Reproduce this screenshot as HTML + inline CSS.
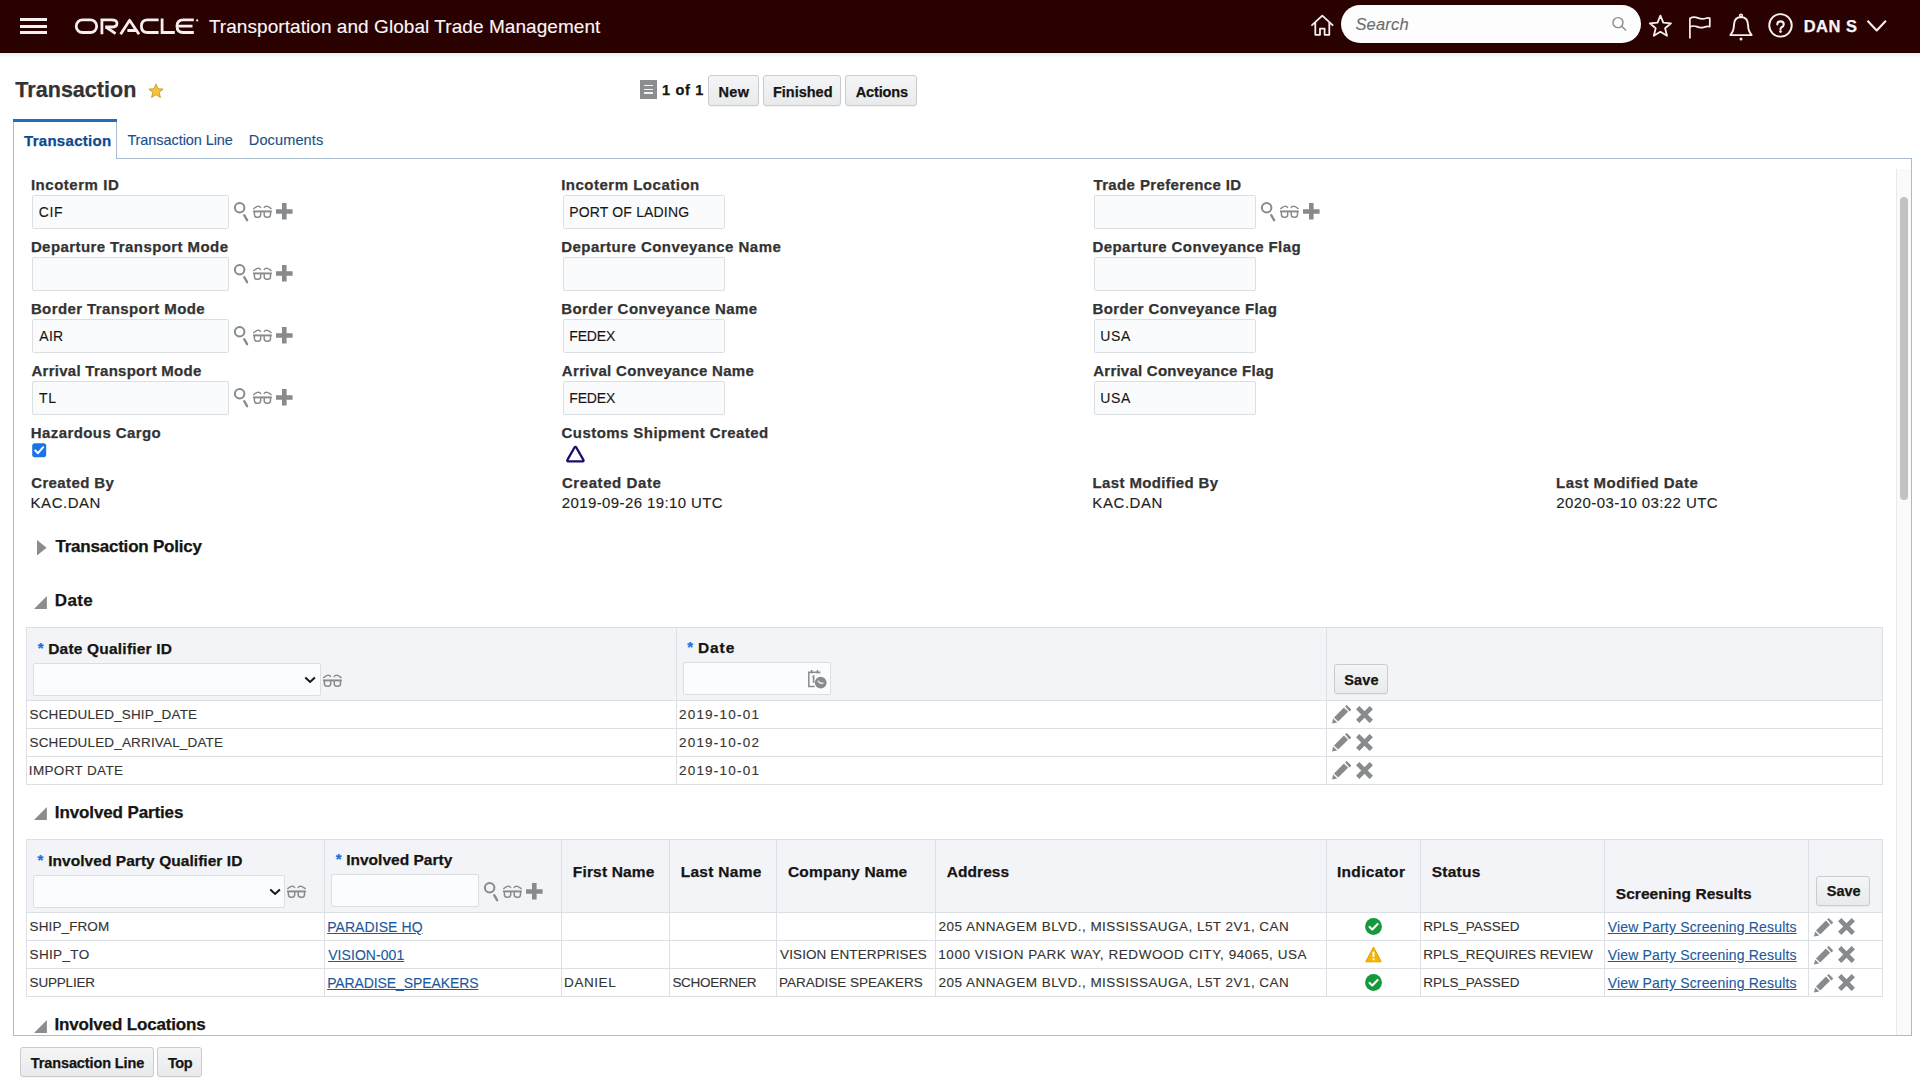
<!DOCTYPE html><html><head><meta charset="utf-8"><title>Transaction</title><style>
html,body{margin:0;padding:0;}
body{width:1920px;height:1080px;overflow:hidden;background:#ffffff;position:relative;font-family:"Liberation Sans", sans-serif;}
.t{position:absolute;white-space:nowrap;line-height:1;}
.t{-webkit-text-stroke:0.12px currentColor;}
.t[style*="font-weight:bold"]{-webkit-text-stroke:0.25px currentColor;}
.b{position:absolute;}
.s{position:absolute;overflow:visible;}
.btn{position:absolute;border:1px solid #c9cbce;border-radius:3px;background:linear-gradient(#f4f5f6,#e9eaec);box-shadow:0 1px 0 rgba(0,0,0,0.04);}
.inp{position:absolute;border:1px solid #dcdfe2;border-radius:2px;background:#fafbfc;}
</style></head><body>
<div class="b" style="left:0.00px;top:0.00px;width:1920.00px;height:52.50px;background:#2a0101;"></div>
<div class="b" style="left:0.00px;top:52.50px;width:1920.00px;height:5.50px;background:linear-gradient(rgba(0,0,0,0.07),rgba(0,0,0,0));"></div>
<div class="b" style="left:19.80px;top:18.20px;width:27.70px;height:3.00px;background:#f7f0f0;"></div>
<div class="b" style="left:19.80px;top:24.60px;width:27.70px;height:3.00px;background:#f7f0f0;"></div>
<div class="b" style="left:19.80px;top:31.00px;width:27.70px;height:3.00px;background:#f7f0f0;"></div>
<svg class="s" style="left:74.00px;top:17.50px;width:126px;height:17px" viewBox="0 0 126 17"><g fill="none" stroke="#f6efef" stroke-width="2.8">
<rect x="2.2" y="1.9" width="20.5" height="12.6" rx="6.3"/>
<path d="M27.9 16.2 V1.9 H37.5 Q43.0 1.9 43.0 5.45 Q43.0 9.0 37.5 9.0 H31.2"/><path d="M31.9 9.0 L41.6 15.6" stroke-linecap="butt"/>
<path d="M46.6 16.2 L55.6 2.2 L65.0 16.2 M61.8 12.5 H53.4" stroke-linejoin="round"/>
<path d="M84.6 1.9 H73.6 Q67.4 1.9 67.4 8.2 Q67.4 14.5 73.6 14.5 H84.6"/>
<path d="M88.1 0.5 V14.5 H100.8"/>
<path d="M119.8 1.9 H109.3 Q103.0 1.9 103.0 8.2 Q103.0 14.5 109.3 14.5 H119.8 M104.5 8.2 H118.5"/>
</g><circle cx="123.2" cy="2.4" r="1.1" fill="#f6efef"/></svg>
<div class="t " style="left:208.88px;top:16.92px;font-size:19px;font-weight:normal;color:#fbf6f6;letter-spacing:0.059px;">Transportation and Global Trade Management</div>
<svg class="s" style="left:1310.00px;top:14.00px;width:25px;height:23px" viewBox="0 0 25 23"><path d="M2 11.2 L12.3 1.6 L22.6 11.2 M5.3 8.4 V20.8 H10 V14.6 H14.6 V20.8 H19.3 V8.4" fill="none" stroke="#f7f0f0" stroke-width="1.8" stroke-linejoin="round" stroke-linecap="round"/></svg>
<div class="b" style="left:1341px;top:5px;width:300px;height:38px;border-radius:19px;background:#fdfdfd;"></div>
<div class="t " style="left:1355.44px;top:15.63px;font-size:16.5px;font-weight:normal;color:#6e6e6e;letter-spacing:0.17px;font-style:italic;">Search</div>
<svg class="s" style="left:1611.00px;top:16.00px;width:17px;height:16px" viewBox="0 0 17 16"><circle cx="7" cy="6.6" r="5" fill="none" stroke="#8a8a8a" stroke-width="1.4"/><path d="M10.6 10.2 L14.6 14" stroke="#8a8a8a" stroke-width="1.5" stroke-linecap="round"/></svg>
<svg class="s" style="left:1648.00px;top:14.00px;width:25px;height:23px" viewBox="0 0 25 23"><path d="M12.4 1.6 L15.3 8.7 L23 9.3 L17.1 14.3 L19 21.8 L12.4 17.8 L5.8 21.8 L7.7 14.3 L1.8 9.3 L9.5 8.7 Z" fill="none" stroke="#f7f0f0" stroke-width="1.8" stroke-linejoin="round"/></svg>
<svg class="s" style="left:1688.00px;top:15.00px;width:25px;height:25px" viewBox="0 0 25 25"><path d="M1.9 23.4 V3.4 Q5.5 1.2 9.8 2.9 Q14 4.7 18.0 3.2 Q20.6 2.4 21.8 3.2 V11.6 Q19.5 10.8 16.4 12.1 Q12.6 13.3 8.8 11.6 Q5.1 10.2 1.9 12.1" fill="none" stroke="#f7f0f0" stroke-width="1.7" stroke-linejoin="round"/></svg>
<svg class="s" style="left:1728.00px;top:13.00px;width:27px;height:29px" viewBox="0 0 27 29"><g fill="none" stroke="#f7f0f0" stroke-width="1.9" stroke-linejoin="round"><path d="M1.6 22.1 H24.4 M2.3 22.1 Q5.9 18.2 5.9 12.6 Q5.9 4.2 13 4.0 Q20.1 4.2 20.1 12.6 Q20.1 18.2 23.7 22.1"/><circle cx="13" cy="2.5" r="1.3" stroke-width="1.6"/></g><circle cx="13" cy="26.0" r="1.5" fill="#f7f0f0"/></svg>
<svg class="s" style="left:1767.00px;top:12.00px;width:27px;height:27px" viewBox="0 0 27 27"><circle cx="13.5" cy="13.35" r="11.25" fill="none" stroke="#f7f0f0" stroke-width="1.9"/><path d="M10.3 12.4 Q10.3 9.35 13.5 9.35 Q16.75 9.35 16.75 12.2 Q16.75 14.2 14.6 15.2 Q13.5 15.8 13.5 17.3" fill="none" stroke="#f7f0f0" stroke-width="2.1" stroke-linecap="round"/><circle cx="13.5" cy="19.6" r="1.35" fill="#f7f0f0"/></svg>
<div class="t " style="left:1803.69px;top:17.83px;font-size:16.5px;font-weight:bold;color:#faf5f5;letter-spacing:0.479px;">DAN S</div>
<svg class="s" style="left:1866.00px;top:19.00px;width:22px;height:14px" viewBox="0 0 22 14"><path d="M1.5 1.8 L10.7 11.5 L19.9 1.8" fill="none" stroke="#f7f0f0" stroke-width="2.1" stroke-linejoin="round"/></svg>
<div class="t " style="left:15.36px;top:79.70px;font-size:21.5px;font-weight:bold;color:#333333;letter-spacing:0.029px;">Transaction</div>
<svg class="s" style="left:148.00px;top:83.00px;width:16px;height:16px" viewBox="0 0 16 16"><path d="M8 0.9 L10 5.8 L15.1 6.1 L11.2 9.4 L12.4 14.5 L8 11.7 L3.6 14.5 L4.8 9.4 L0.9 6.1 L6 5.8 Z" fill="#f4c43a" stroke="#c99b22" stroke-width="0.9" stroke-linejoin="round"/></svg>
<div class="b" style="left:640.10px;top:80.00px;width:16.70px;height:18.60px;background:#8b8e91;"></div>
<div class="b" style="left:644.00px;top:84.90px;width:9.00px;height:1.50px;background:#f4f4f4;"></div>
<div class="b" style="left:644.00px;top:88.60px;width:9.00px;height:1.50px;background:#f4f4f4;"></div>
<div class="b" style="left:644.00px;top:92.30px;width:9.00px;height:1.50px;background:#f4f4f4;"></div>
<div class="t " style="left:661.89px;top:82.73px;font-size:14.5px;font-weight:bold;color:#161513;letter-spacing:0.729px;">1 of 1</div>
<div class="btn" style="left:708.00px;top:75.00px;width:49.00px;height:29.00px"></div>
<div class="t " style="left:718.43px;top:84.83px;font-size:14.5px;font-weight:bold;color:#161513;letter-spacing:0.365px;">New</div>
<div class="btn" style="left:763.00px;top:75.00px;width:76.00px;height:29.00px"></div>
<div class="t " style="left:773.03px;top:84.83px;font-size:14.5px;font-weight:bold;color:#161513;letter-spacing:-0.014px;">Finished</div>
<div class="btn" style="left:845.00px;top:75.00px;width:70.00px;height:29.00px"></div>
<div class="t " style="left:855.64px;top:84.83px;font-size:14.5px;font-weight:bold;color:#161513;letter-spacing:-0.119px;">Actions</div>
<div class="b" style="left:13px;top:158px;width:1897px;height:876px;border:1px solid #a9bccf;background:#fff;"></div>
<div class="b" style="left:13px;top:119px;width:102px;height:40px;border-left:1px solid #a9bccf;border-right:1px solid #a9bccf;background:#fff;"></div>
<div class="b" style="left:13.00px;top:119.00px;width:104.00px;height:3.00px;background:#1a6ec4;"></div>
<div class="t " style="left:24.04px;top:133.10px;font-size:15px;font-weight:bold;color:#0c4a8f;letter-spacing:0.29px;">Transaction</div>
<div class="t " style="left:127.38px;top:132.73px;font-size:14.5px;font-weight:normal;color:#1a4f8c;letter-spacing:-0.074px;">Transaction Line</div>
<div class="t " style="left:248.81px;top:132.73px;font-size:14.5px;font-weight:normal;color:#1a4f8c;letter-spacing:0.134px;">Documents</div>
<div class="b" style="left:1896.00px;top:169.00px;width:14.00px;height:866.00px;background:#fafafa;border-left:1px solid #e9e9e9;"></div>
<div class="b" style="left:1900px;top:197.2px;width:8px;height:302.6px;border-radius:4px;background:#c2c2c2;"></div>
<div class="t " style="left:30.89px;top:177.30px;font-size:15px;font-weight:bold;color:#333333;letter-spacing:0.532px;">Incoterm ID</div>
<div class="inp" style="left:32.00px;top:195.00px;width:195.00px;height:32.00px;"></div>
<div class="t " style="left:38.69px;top:204.85px;font-size:14px;font-weight:normal;color:#161513;letter-spacing:0.61px;">CIF</div>
<svg class="s" style="left:232.90px;top:201.00px;width:17px;height:21px" viewBox="0 0 17 21"><circle cx="6.65" cy="6.75" r="4.75" fill="none" stroke="#878b8e" stroke-width="2.0"/><path d="M11.2 14.2 L14.1 19.2" stroke="#878b8e" stroke-width="2.3" stroke-linecap="round"/></svg>
<svg class="s" style="left:252.40px;top:204.00px;width:21px;height:15px" viewBox="0 0 21 15"><g fill="none" stroke="#878b8e"><path d="M1.0 7.4 H19.8" stroke-width="1.9"/><path d="M2.4 7.4 V10.6 Q2.4 13.2 5.0 13.2 H6.2 Q8.7 13.2 8.7 10.6 V7.4" stroke-width="1.5"/><path d="M12.2 7.4 V10.6 Q12.2 13.2 14.8 13.2 H16.0 Q18.5 13.2 18.5 10.6 V7.4" stroke-width="1.5"/><path d="M1.3 4.9 Q4.5 2.2 6.3 2.1 Q8.0 2.1 8.9 4.0" stroke-width="1.4"/><path d="M19.5 4.9 Q16.3 2.2 14.5 2.1 Q12.8 2.1 11.9 4.0" stroke-width="1.4"/></g></svg>
<svg class="s" style="left:276.40px;top:202.90px;width:17px;height:17px" viewBox="0 0 17 17"><path d="M6 0 H10.6 V6.2 H16.6 V10.8 H10.6 V16.6 H6 V10.8 H0 V6.2 H6 Z" fill="#878b8e"/></svg>
<div class="t " style="left:561.20px;top:177.30px;font-size:15px;font-weight:bold;color:#333333;letter-spacing:0.501px;">Incoterm Location</div>
<div class="inp" style="left:563.00px;top:195.00px;width:160.00px;height:32.00px;"></div>
<div class="t " style="left:569.25px;top:204.85px;font-size:14px;font-weight:normal;color:#161513;letter-spacing:0.159px;">PORT OF LADING</div>
<div class="t " style="left:1093.43px;top:177.30px;font-size:15px;font-weight:bold;color:#333333;letter-spacing:0.378px;">Trade Preference ID</div>
<div class="inp" style="left:1094.00px;top:195.00px;width:160.00px;height:32.00px;"></div>
<svg class="s" style="left:1259.90px;top:201.00px;width:17px;height:21px" viewBox="0 0 17 21"><circle cx="6.65" cy="6.75" r="4.75" fill="none" stroke="#878b8e" stroke-width="2.0"/><path d="M11.2 14.2 L14.1 19.2" stroke="#878b8e" stroke-width="2.3" stroke-linecap="round"/></svg>
<svg class="s" style="left:1279.40px;top:204.00px;width:21px;height:15px" viewBox="0 0 21 15"><g fill="none" stroke="#878b8e"><path d="M1.0 7.4 H19.8" stroke-width="1.9"/><path d="M2.4 7.4 V10.6 Q2.4 13.2 5.0 13.2 H6.2 Q8.7 13.2 8.7 10.6 V7.4" stroke-width="1.5"/><path d="M12.2 7.4 V10.6 Q12.2 13.2 14.8 13.2 H16.0 Q18.5 13.2 18.5 10.6 V7.4" stroke-width="1.5"/><path d="M1.3 4.9 Q4.5 2.2 6.3 2.1 Q8.0 2.1 8.9 4.0" stroke-width="1.4"/><path d="M19.5 4.9 Q16.3 2.2 14.5 2.1 Q12.8 2.1 11.9 4.0" stroke-width="1.4"/></g></svg>
<svg class="s" style="left:1303.40px;top:202.90px;width:17px;height:17px" viewBox="0 0 17 17"><path d="M6 0 H10.6 V6.2 H16.6 V10.8 H10.6 V16.6 H6 V10.8 H0 V6.2 H6 Z" fill="#878b8e"/></svg>
<div class="t " style="left:30.89px;top:239.30px;font-size:15px;font-weight:bold;color:#333333;letter-spacing:0.417px;">Departure Transport Mode</div>
<div class="inp" style="left:32.00px;top:257.00px;width:195.00px;height:32.00px;"></div>
<svg class="s" style="left:232.90px;top:263.00px;width:17px;height:21px" viewBox="0 0 17 21"><circle cx="6.65" cy="6.75" r="4.75" fill="none" stroke="#878b8e" stroke-width="2.0"/><path d="M11.2 14.2 L14.1 19.2" stroke="#878b8e" stroke-width="2.3" stroke-linecap="round"/></svg>
<svg class="s" style="left:252.40px;top:266.00px;width:21px;height:15px" viewBox="0 0 21 15"><g fill="none" stroke="#878b8e"><path d="M1.0 7.4 H19.8" stroke-width="1.9"/><path d="M2.4 7.4 V10.6 Q2.4 13.2 5.0 13.2 H6.2 Q8.7 13.2 8.7 10.6 V7.4" stroke-width="1.5"/><path d="M12.2 7.4 V10.6 Q12.2 13.2 14.8 13.2 H16.0 Q18.5 13.2 18.5 10.6 V7.4" stroke-width="1.5"/><path d="M1.3 4.9 Q4.5 2.2 6.3 2.1 Q8.0 2.1 8.9 4.0" stroke-width="1.4"/><path d="M19.5 4.9 Q16.3 2.2 14.5 2.1 Q12.8 2.1 11.9 4.0" stroke-width="1.4"/></g></svg>
<svg class="s" style="left:276.40px;top:264.90px;width:17px;height:17px" viewBox="0 0 17 17"><path d="M6 0 H10.6 V6.2 H16.6 V10.8 H10.6 V16.6 H6 V10.8 H0 V6.2 H6 Z" fill="#878b8e"/></svg>
<div class="t " style="left:561.20px;top:239.30px;font-size:15px;font-weight:bold;color:#333333;letter-spacing:0.467px;">Departure Conveyance Name</div>
<div class="inp" style="left:563.00px;top:257.00px;width:160.00px;height:32.00px;"></div>
<div class="t " style="left:1092.59px;top:239.30px;font-size:15px;font-weight:bold;color:#333333;letter-spacing:0.4px;">Departure Conveyance Flag</div>
<div class="inp" style="left:1094.00px;top:257.00px;width:160.00px;height:32.00px;"></div>
<div class="t " style="left:30.89px;top:301.30px;font-size:15px;font-weight:bold;color:#333333;letter-spacing:0.398px;">Border Transport Mode</div>
<div class="inp" style="left:32.00px;top:319.00px;width:195.00px;height:32.00px;"></div>
<div class="t " style="left:39.37px;top:328.85px;font-size:14px;font-weight:normal;color:#161513;letter-spacing:0.224px;">AIR</div>
<svg class="s" style="left:232.90px;top:325.00px;width:17px;height:21px" viewBox="0 0 17 21"><circle cx="6.65" cy="6.75" r="4.75" fill="none" stroke="#878b8e" stroke-width="2.0"/><path d="M11.2 14.2 L14.1 19.2" stroke="#878b8e" stroke-width="2.3" stroke-linecap="round"/></svg>
<svg class="s" style="left:252.40px;top:328.00px;width:21px;height:15px" viewBox="0 0 21 15"><g fill="none" stroke="#878b8e"><path d="M1.0 7.4 H19.8" stroke-width="1.9"/><path d="M2.4 7.4 V10.6 Q2.4 13.2 5.0 13.2 H6.2 Q8.7 13.2 8.7 10.6 V7.4" stroke-width="1.5"/><path d="M12.2 7.4 V10.6 Q12.2 13.2 14.8 13.2 H16.0 Q18.5 13.2 18.5 10.6 V7.4" stroke-width="1.5"/><path d="M1.3 4.9 Q4.5 2.2 6.3 2.1 Q8.0 2.1 8.9 4.0" stroke-width="1.4"/><path d="M19.5 4.9 Q16.3 2.2 14.5 2.1 Q12.8 2.1 11.9 4.0" stroke-width="1.4"/></g></svg>
<svg class="s" style="left:276.40px;top:326.90px;width:17px;height:17px" viewBox="0 0 17 17"><path d="M6 0 H10.6 V6.2 H16.6 V10.8 H10.6 V16.6 H6 V10.8 H0 V6.2 H6 Z" fill="#878b8e"/></svg>
<div class="t " style="left:561.20px;top:301.30px;font-size:15px;font-weight:bold;color:#333333;letter-spacing:0.442px;">Border Conveyance Name</div>
<div class="inp" style="left:563.00px;top:319.00px;width:160.00px;height:32.00px;"></div>
<div class="t " style="left:569.25px;top:328.85px;font-size:14px;font-weight:normal;color:#161513;letter-spacing:-0.158px;">FEDEX</div>
<div class="t " style="left:1092.59px;top:301.30px;font-size:15px;font-weight:bold;color:#333333;letter-spacing:0.362px;">Border Conveyance Flag</div>
<div class="inp" style="left:1094.00px;top:319.00px;width:160.00px;height:32.00px;"></div>
<div class="t " style="left:1100.32px;top:328.85px;font-size:14px;font-weight:normal;color:#161513;letter-spacing:0.611px;">USA</div>
<div class="t " style="left:31.52px;top:363.30px;font-size:15px;font-weight:bold;color:#333333;letter-spacing:0.266px;">Arrival Transport Mode</div>
<div class="inp" style="left:32.00px;top:381.00px;width:195.00px;height:32.00px;"></div>
<div class="t " style="left:39.09px;top:390.85px;font-size:14px;font-weight:normal;color:#161513;letter-spacing:0.632px;">TL</div>
<svg class="s" style="left:232.90px;top:387.00px;width:17px;height:21px" viewBox="0 0 17 21"><circle cx="6.65" cy="6.75" r="4.75" fill="none" stroke="#878b8e" stroke-width="2.0"/><path d="M11.2 14.2 L14.1 19.2" stroke="#878b8e" stroke-width="2.3" stroke-linecap="round"/></svg>
<svg class="s" style="left:252.40px;top:390.00px;width:21px;height:15px" viewBox="0 0 21 15"><g fill="none" stroke="#878b8e"><path d="M1.0 7.4 H19.8" stroke-width="1.9"/><path d="M2.4 7.4 V10.6 Q2.4 13.2 5.0 13.2 H6.2 Q8.7 13.2 8.7 10.6 V7.4" stroke-width="1.5"/><path d="M12.2 7.4 V10.6 Q12.2 13.2 14.8 13.2 H16.0 Q18.5 13.2 18.5 10.6 V7.4" stroke-width="1.5"/><path d="M1.3 4.9 Q4.5 2.2 6.3 2.1 Q8.0 2.1 8.9 4.0" stroke-width="1.4"/><path d="M19.5 4.9 Q16.3 2.2 14.5 2.1 Q12.8 2.1 11.9 4.0" stroke-width="1.4"/></g></svg>
<svg class="s" style="left:276.40px;top:388.90px;width:17px;height:17px" viewBox="0 0 17 17"><path d="M6 0 H10.6 V6.2 H16.6 V10.8 H10.6 V16.6 H6 V10.8 H0 V6.2 H6 Z" fill="#878b8e"/></svg>
<div class="t " style="left:561.83px;top:363.30px;font-size:15px;font-weight:bold;color:#333333;letter-spacing:0.314px;">Arrival Conveyance Name</div>
<div class="inp" style="left:563.00px;top:381.00px;width:160.00px;height:32.00px;"></div>
<div class="t " style="left:569.25px;top:390.85px;font-size:14px;font-weight:normal;color:#161513;letter-spacing:-0.158px;">FEDEX</div>
<div class="t " style="left:1093.22px;top:363.30px;font-size:15px;font-weight:bold;color:#333333;letter-spacing:0.245px;">Arrival Conveyance Flag</div>
<div class="inp" style="left:1094.00px;top:381.00px;width:160.00px;height:32.00px;"></div>
<div class="t " style="left:1100.32px;top:390.85px;font-size:14px;font-weight:normal;color:#161513;letter-spacing:0.611px;">USA</div>
<div class="t " style="left:30.80px;top:425.30px;font-size:15px;font-weight:bold;color:#333333;letter-spacing:0.407px;">Hazardous Cargo</div>
<svg class="s" style="left:32.00px;top:443.00px;width:15px;height:15px" viewBox="0 0 15 15"><rect x="0.2" y="0.2" width="14" height="14" rx="2.6" fill="#1a73e8"/><path d="M3.2 7.4 L6 10.2 L11.2 4.2" fill="none" stroke="#fff" stroke-width="2" stroke-linecap="round" stroke-linejoin="round"/></svg>
<div class="t " style="left:561.59px;top:425.30px;font-size:15px;font-weight:bold;color:#333333;letter-spacing:0.43px;">Customs Shipment Created</div>
<svg class="s" style="left:565.00px;top:445.00px;width:21px;height:19px" viewBox="0 0 21 19"><path d="M10.4 1.9 Q10.9 1.9 11.3 2.5 L18.4 14.9 Q19.0 16.4 17.6 16.4 H3.2 Q1.8 16.4 2.4 14.9 L9.5 2.5 Q9.9 1.9 10.4 1.9 Z" fill="none" stroke="#1b0d6b" stroke-width="2.3" stroke-linejoin="round"/></svg>
<div class="t " style="left:31.19px;top:475.30px;font-size:15px;font-weight:bold;color:#333333;letter-spacing:0.382px;">Created By</div>
<div class="t " style="left:30.57px;top:495.10px;font-size:15px;font-weight:normal;color:#222222;letter-spacing:0.528px;">KAC.DAN</div>
<div class="t " style="left:561.88px;top:475.30px;font-size:15px;font-weight:bold;color:#333333;letter-spacing:0.59px;">Created Date</div>
<div class="t " style="left:561.75px;top:495.10px;font-size:15px;font-weight:normal;color:#222222;letter-spacing:0.389px;">2019-09-26 19:10 UTC</div>
<div class="t " style="left:1092.59px;top:475.30px;font-size:15px;font-weight:bold;color:#333333;letter-spacing:0.365px;">Last Modified By</div>
<div class="t " style="left:1092.37px;top:495.10px;font-size:15px;font-weight:normal;color:#222222;letter-spacing:0.562px;">KAC.DAN</div>
<div class="t " style="left:1556.09px;top:475.30px;font-size:15px;font-weight:bold;color:#333333;letter-spacing:0.492px;">Last Modified Date</div>
<div class="t " style="left:1556.35px;top:495.10px;font-size:15px;font-weight:normal;color:#222222;letter-spacing:0.411px;">2020-03-10 03:22 UTC</div>
<svg class="s" style="left:36.90px;top:540.00px;width:10px;height:16px" viewBox="0 0 10 16"><path d="M0 0 L9.6 7.8 L0 15.6 Z" fill="#8a8d90"/></svg>
<div class="t " style="left:55.41px;top:537.51px;font-size:17px;font-weight:bold;color:#161513;letter-spacing:-0.214px;">Transaction Policy</div>
<svg class="s" style="left:33.70px;top:595.60px;width:13px;height:13px" viewBox="0 0 13 13"><path d="M12.9 0 V12.9 H0 Z" fill="#8a8d90"/></svg>
<div class="t " style="left:54.76px;top:591.51px;font-size:17px;font-weight:bold;color:#161513;letter-spacing:0.409px;">Date</div>
<div class="b" style="left:26px;top:627px;width:1855px;height:156px;border:1px solid #dde0e4;background:#fff;"></div>
<div class="b" style="left:27.00px;top:628.00px;width:1855.00px;height:72.00px;background:#f2f4f7;"></div>
<div class="b" style="left:26.00px;top:700.00px;width:1857.00px;height:1.00px;background:#dde0e4;"></div>
<div class="b" style="left:26.00px;top:728.00px;width:1857.00px;height:1.00px;background:#dde0e4;"></div>
<div class="b" style="left:26.00px;top:756.00px;width:1857.00px;height:1.00px;background:#dde0e4;"></div>
<div class="b" style="left:676.00px;top:627.00px;width:1.00px;height:157.00px;background:#dde0e4;"></div>
<div class="b" style="left:1326.00px;top:627.00px;width:1.00px;height:157.00px;background:#dde0e4;"></div>
<div class="t " style="left:37.80px;top:639.80px;font-size:15px;font-weight:bold;color:#1d6fe0;">*</div>
<div class="t " style="left:48.16px;top:640.88px;font-size:15.5px;font-weight:bold;color:#161513;letter-spacing:0.206px;">Date Qualifier ID</div>
<div class="inp" style="left:33.00px;top:663.00px;width:286.00px;height:31.00px;background:#fbfcfd;"></div>
<svg class="s" style="left:304.00px;top:675.50px;width:13px;height:8px" viewBox="0 0 13 8"><path d="M1.3 1.5 L6.1 5.9 L10.9 1.5" fill="none" stroke="#161513" stroke-width="2.0"/></svg>
<svg class="s" style="left:322.20px;top:672.60px;width:21px;height:15px" viewBox="0 0 21 15"><g fill="none" stroke="#878b8e"><path d="M1.0 7.4 H19.8" stroke-width="1.9"/><path d="M2.4 7.4 V10.6 Q2.4 13.2 5.0 13.2 H6.2 Q8.7 13.2 8.7 10.6 V7.4" stroke-width="1.5"/><path d="M12.2 7.4 V10.6 Q12.2 13.2 14.8 13.2 H16.0 Q18.5 13.2 18.5 10.6 V7.4" stroke-width="1.5"/><path d="M1.3 4.9 Q4.5 2.2 6.3 2.1 Q8.0 2.1 8.9 4.0" stroke-width="1.4"/><path d="M19.5 4.9 Q16.3 2.2 14.5 2.1 Q12.8 2.1 11.9 4.0" stroke-width="1.4"/></g></svg>
<div class="t " style="left:687.20px;top:639.30px;font-size:15px;font-weight:bold;color:#1d6fe0;">*</div>
<div class="t " style="left:697.96px;top:640.38px;font-size:15.5px;font-weight:bold;color:#161513;letter-spacing:0.909px;">Date</div>
<div class="inp" style="left:683.00px;top:662.00px;width:146.00px;height:31.00px;background:#fbfcfd;"></div>
<svg class="s" style="left:807.00px;top:669.00px;width:21px;height:21px" viewBox="0 0 21 21"><g fill="none" stroke="#878b8e" stroke-width="1.5"><path d="M12.6 4.4 V3.3 H1.8 V17.6 H7.6"/><path d="M4.6 1 V4.6 M10.4 1 V4.6"/></g><path d="M5.5 8.4 L6.6 7.4 V13.8" stroke="#878b8e" stroke-width="1.6" fill="none"/><circle cx="13.7" cy="13.6" r="5.9" fill="#878b8e"/><path d="M10.9 11.6 Q12.6 14.9 16.4 14.1" fill="none" stroke="#e9eaeb" stroke-width="1.3"/></svg>
<div class="btn" style="left:1334.00px;top:664.00px;width:52.00px;height:28.00px"></div>
<div class="t " style="left:1344.28px;top:672.53px;font-size:14.5px;font-weight:bold;color:#161513;letter-spacing:0.119px;">Save</div>
<div class="t " style="left:29.48px;top:707.77px;font-size:13.5px;font-weight:normal;color:#333333;letter-spacing:0.156px;">SCHEDULED_SHIP_DATE</div>
<div class="t " style="left:678.93px;top:707.77px;font-size:13.5px;font-weight:normal;color:#333333;letter-spacing:1.22px;">2019-10-01</div>
<svg class="s" style="left:1331.90px;top:705.30px;width:20px;height:19px" viewBox="0 0 20 19"><g fill="#878b8e"><path d="M0 18.6 L1.1 13.4 L5.2 17.5 Z"/><path d="M2.0 12.4 L11.9 2.5 L16.1 6.7 L6.2 16.6 Z"/><path d="M13.1 1.3 L14.0 0.4 Q14.6 -0.2 15.2 0.4 L18.8 4.0 Q19.4 4.6 18.8 5.2 L17.3 6.5 Z"/></g></svg>
<svg class="s" style="left:1356.00px;top:705.90px;width:17px;height:17px" viewBox="0 0 17 17"><path d="M1.7 1.7 L15.3 15.3 M15.3 1.7 L1.7 15.3" stroke="#878b8e" stroke-width="4.7" stroke-linecap="butt"/></svg>
<div class="t " style="left:29.48px;top:735.77px;font-size:13.5px;font-weight:normal;color:#333333;letter-spacing:0.164px;">SCHEDULED_ARRIVAL_DATE</div>
<div class="t " style="left:678.93px;top:735.77px;font-size:13.5px;font-weight:normal;color:#333333;letter-spacing:1.222px;">2019-10-02</div>
<svg class="s" style="left:1331.90px;top:733.30px;width:20px;height:19px" viewBox="0 0 20 19"><g fill="#878b8e"><path d="M0 18.6 L1.1 13.4 L5.2 17.5 Z"/><path d="M2.0 12.4 L11.9 2.5 L16.1 6.7 L6.2 16.6 Z"/><path d="M13.1 1.3 L14.0 0.4 Q14.6 -0.2 15.2 0.4 L18.8 4.0 Q19.4 4.6 18.8 5.2 L17.3 6.5 Z"/></g></svg>
<svg class="s" style="left:1356.00px;top:733.90px;width:17px;height:17px" viewBox="0 0 17 17"><path d="M1.7 1.7 L15.3 15.3 M15.3 1.7 L1.7 15.3" stroke="#878b8e" stroke-width="4.7" stroke-linecap="butt"/></svg>
<div class="t " style="left:28.86px;top:763.77px;font-size:13.5px;font-weight:normal;color:#333333;letter-spacing:0.336px;">IMPORT DATE</div>
<div class="t " style="left:678.93px;top:763.77px;font-size:13.5px;font-weight:normal;color:#333333;letter-spacing:1.22px;">2019-10-01</div>
<svg class="s" style="left:1331.90px;top:761.30px;width:20px;height:19px" viewBox="0 0 20 19"><g fill="#878b8e"><path d="M0 18.6 L1.1 13.4 L5.2 17.5 Z"/><path d="M2.0 12.4 L11.9 2.5 L16.1 6.7 L6.2 16.6 Z"/><path d="M13.1 1.3 L14.0 0.4 Q14.6 -0.2 15.2 0.4 L18.8 4.0 Q19.4 4.6 18.8 5.2 L17.3 6.5 Z"/></g></svg>
<svg class="s" style="left:1356.00px;top:761.90px;width:17px;height:17px" viewBox="0 0 17 17"><path d="M1.7 1.7 L15.3 15.3 M15.3 1.7 L1.7 15.3" stroke="#878b8e" stroke-width="4.7" stroke-linecap="butt"/></svg>
<svg class="s" style="left:33.60px;top:807.30px;width:13px;height:13px" viewBox="0 0 13 13"><path d="M12.9 0 V12.9 H0 Z" fill="#8a8d90"/></svg>
<div class="t " style="left:54.86px;top:803.51px;font-size:17px;font-weight:bold;color:#161513;letter-spacing:-0.124px;">Involved Parties</div>
<div class="b" style="left:26px;top:839px;width:1855px;height:156px;border:1px solid #dde0e4;background:#fff;"></div>
<div class="b" style="left:27.00px;top:840.00px;width:1855.00px;height:72.00px;background:#f2f4f7;"></div>
<div class="b" style="left:26.00px;top:912.00px;width:1857.00px;height:1.00px;background:#dde0e4;"></div>
<div class="b" style="left:26.00px;top:940.00px;width:1857.00px;height:1.00px;background:#dde0e4;"></div>
<div class="b" style="left:26.00px;top:968.00px;width:1857.00px;height:1.00px;background:#dde0e4;"></div>
<div class="b" style="left:324.00px;top:839.00px;width:1.00px;height:157.00px;background:#dde0e4;"></div>
<div class="b" style="left:561.00px;top:839.00px;width:1.00px;height:157.00px;background:#dde0e4;"></div>
<div class="b" style="left:669.00px;top:839.00px;width:1.00px;height:157.00px;background:#dde0e4;"></div>
<div class="b" style="left:776.00px;top:839.00px;width:1.00px;height:157.00px;background:#dde0e4;"></div>
<div class="b" style="left:935.00px;top:839.00px;width:1.00px;height:157.00px;background:#dde0e4;"></div>
<div class="b" style="left:1326.00px;top:839.00px;width:1.00px;height:157.00px;background:#dde0e4;"></div>
<div class="b" style="left:1420.00px;top:839.00px;width:1.00px;height:157.00px;background:#dde0e4;"></div>
<div class="b" style="left:1604.00px;top:839.00px;width:1.00px;height:157.00px;background:#dde0e4;"></div>
<div class="b" style="left:1808.00px;top:839.00px;width:1.00px;height:157.00px;background:#dde0e4;"></div>
<div class="t " style="left:37.60px;top:852.10px;font-size:15px;font-weight:bold;color:#1d6fe0;">*</div>
<div class="t " style="left:48.16px;top:853.38px;font-size:15.5px;font-weight:bold;color:#161513;letter-spacing:0.048px;">Involved Party Qualifier ID</div>
<div class="inp" style="left:33.00px;top:875.00px;width:250.00px;height:31.00px;background:#fbfcfd;"></div>
<svg class="s" style="left:268.50px;top:887.50px;width:13px;height:8px" viewBox="0 0 13 8"><path d="M1.3 1.5 L6.1 5.9 L10.9 1.5" fill="none" stroke="#161513" stroke-width="2.0"/></svg>
<svg class="s" style="left:286.00px;top:884.20px;width:21px;height:15px" viewBox="0 0 21 15"><g fill="none" stroke="#878b8e"><path d="M1.0 7.4 H19.8" stroke-width="1.9"/><path d="M2.4 7.4 V10.6 Q2.4 13.2 5.0 13.2 H6.2 Q8.7 13.2 8.7 10.6 V7.4" stroke-width="1.5"/><path d="M12.2 7.4 V10.6 Q12.2 13.2 14.8 13.2 H16.0 Q18.5 13.2 18.5 10.6 V7.4" stroke-width="1.5"/><path d="M1.3 4.9 Q4.5 2.2 6.3 2.1 Q8.0 2.1 8.9 4.0" stroke-width="1.4"/><path d="M19.5 4.9 Q16.3 2.2 14.5 2.1 Q12.8 2.1 11.9 4.0" stroke-width="1.4"/></g></svg>
<div class="t " style="left:335.70px;top:851.30px;font-size:15px;font-weight:bold;color:#1d6fe0;">*</div>
<div class="t " style="left:346.16px;top:852.48px;font-size:15.5px;font-weight:bold;color:#161513;letter-spacing:0.012px;">Involved Party</div>
<div class="inp" style="left:331.00px;top:874.00px;width:146.00px;height:31.00px;background:#fbfcfd;"></div>
<svg class="s" style="left:482.90px;top:881.00px;width:17px;height:21px" viewBox="0 0 17 21"><circle cx="6.65" cy="6.75" r="4.75" fill="none" stroke="#878b8e" stroke-width="2.0"/><path d="M11.2 14.2 L14.1 19.2" stroke="#878b8e" stroke-width="2.3" stroke-linecap="round"/></svg>
<svg class="s" style="left:502.40px;top:884.00px;width:21px;height:15px" viewBox="0 0 21 15"><g fill="none" stroke="#878b8e"><path d="M1.0 7.4 H19.8" stroke-width="1.9"/><path d="M2.4 7.4 V10.6 Q2.4 13.2 5.0 13.2 H6.2 Q8.7 13.2 8.7 10.6 V7.4" stroke-width="1.5"/><path d="M12.2 7.4 V10.6 Q12.2 13.2 14.8 13.2 H16.0 Q18.5 13.2 18.5 10.6 V7.4" stroke-width="1.5"/><path d="M1.3 4.9 Q4.5 2.2 6.3 2.1 Q8.0 2.1 8.9 4.0" stroke-width="1.4"/><path d="M19.5 4.9 Q16.3 2.2 14.5 2.1 Q12.8 2.1 11.9 4.0" stroke-width="1.4"/></g></svg>
<svg class="s" style="left:526.40px;top:882.90px;width:17px;height:17px" viewBox="0 0 17 17"><path d="M6 0 H10.6 V6.2 H16.6 V10.8 H10.6 V16.6 H6 V10.8 H0 V6.2 H6 Z" fill="#878b8e"/></svg>
<div class="t " style="left:572.86px;top:863.78px;font-size:15.5px;font-weight:bold;color:#161513;letter-spacing:0.151px;">First Name</div>
<div class="t " style="left:680.66px;top:863.78px;font-size:15.5px;font-weight:bold;color:#161513;letter-spacing:0.298px;">Last Name</div>
<div class="t " style="left:787.96px;top:863.78px;font-size:15.5px;font-weight:bold;color:#161513;letter-spacing:0.194px;">Company Name</div>
<div class="t " style="left:946.71px;top:863.78px;font-size:15.5px;font-weight:bold;color:#161513;letter-spacing:0.068px;">Address</div>
<div class="t " style="left:1336.96px;top:863.78px;font-size:15.5px;font-weight:bold;color:#161513;letter-spacing:0.314px;">Indicator</div>
<div class="t " style="left:1431.75px;top:863.78px;font-size:15.5px;font-weight:bold;color:#161513;letter-spacing:0.243px;">Status</div>
<div class="t " style="left:1615.80px;top:886.28px;font-size:15.5px;font-weight:bold;color:#161513;letter-spacing:0.037px;">Screening Results</div>
<div class="btn" style="left:1816.00px;top:876.00px;width:52.00px;height:28.00px"></div>
<div class="t " style="left:1826.78px;top:884.33px;font-size:14.5px;font-weight:bold;color:#161513;letter-spacing:-0.048px;">Save</div>
<div class="t " style="left:29.58px;top:919.77px;font-size:13.5px;font-weight:normal;color:#333333;letter-spacing:0.109px;">SHIP_FROM</div>
<div class="t " style="left:327.15px;top:920.15px;font-size:14px;font-weight:normal;color:#1c5a9c;letter-spacing:0.077px;"><span style="text-decoration:underline">PARADISE HQ</span></div>
<div class="t " style="left:938.62px;top:919.77px;font-size:13.5px;font-weight:normal;color:#333333;letter-spacing:0.46px;">205 ANNAGEM BLVD., MISSISSAUGA, L5T 2V1, CAN</div>
<svg class="s" style="left:1365.10px;top:918.00px;width:17px;height:17px" viewBox="0 0 17 17"><circle cx="8.5" cy="8.5" r="8.4" fill="#16993c"/><path d="M4.6 8.9 L7.3 11.5 L12.6 6.0" fill="none" stroke="#fff" stroke-width="2.1" stroke-linecap="round" stroke-linejoin="round"/></svg>
<div class="t " style="left:1423.29px;top:919.77px;font-size:13.5px;font-weight:normal;color:#333333;letter-spacing:-0.043px;">RPLS_PASSED</div>
<div class="t " style="left:1607.73px;top:920.15px;font-size:14px;font-weight:normal;color:#1c5a9c;letter-spacing:0.171px;"><span style="text-decoration:underline">View Party Screening Results</span></div>
<svg class="s" style="left:1814.00px;top:917.50px;width:20px;height:19px" viewBox="0 0 20 19"><g fill="#878b8e"><path d="M0 18.6 L1.1 13.4 L5.2 17.5 Z"/><path d="M2.0 12.4 L11.9 2.5 L16.1 6.7 L6.2 16.6 Z"/><path d="M13.1 1.3 L14.0 0.4 Q14.6 -0.2 15.2 0.4 L18.8 4.0 Q19.4 4.6 18.8 5.2 L17.3 6.5 Z"/></g></svg>
<svg class="s" style="left:1838.20px;top:918.10px;width:17px;height:17px" viewBox="0 0 17 17"><path d="M1.7 1.7 L15.3 15.3 M15.3 1.7 L1.7 15.3" stroke="#878b8e" stroke-width="4.7" stroke-linecap="butt"/></svg>
<div class="t " style="left:29.58px;top:947.87px;font-size:13.5px;font-weight:normal;color:#333333;letter-spacing:0.341px;">SHIP_TO</div>
<div class="t " style="left:328.23px;top:948.25px;font-size:14px;font-weight:normal;color:#1c5a9c;letter-spacing:0.054px;"><span style="text-decoration:underline">VISION-001</span></div>
<div class="t " style="left:780.03px;top:947.87px;font-size:13.5px;font-weight:normal;color:#333333;letter-spacing:0.118px;">VISION ENTERPRISES</div>
<div class="t " style="left:938.27px;top:947.87px;font-size:13.5px;font-weight:normal;color:#333333;letter-spacing:0.564px;">1000 VISION PARK WAY, REDWOOD CITY, 94065, USA</div>
<svg class="s" style="left:1365.10px;top:946.00px;width:17px;height:17px" viewBox="0 0 17 17"><path d="M8.5 1 L16.3 15.8 H0.7 Z" fill="#f4b400" stroke="#e0a100" stroke-width="1" stroke-linejoin="round"/><path d="M8.5 5.6 V11" stroke="#fff" stroke-width="2"/><rect x="7.5" y="12.3" width="2" height="2" fill="#fff"/></svg>
<div class="t " style="left:1423.29px;top:947.87px;font-size:13.5px;font-weight:normal;color:#333333;letter-spacing:-0.038px;">RPLS_REQUIRES REVIEW</div>
<div class="t " style="left:1607.73px;top:948.25px;font-size:14px;font-weight:normal;color:#1c5a9c;letter-spacing:0.171px;"><span style="text-decoration:underline">View Party Screening Results</span></div>
<svg class="s" style="left:1814.00px;top:945.60px;width:20px;height:19px" viewBox="0 0 20 19"><g fill="#878b8e"><path d="M0 18.6 L1.1 13.4 L5.2 17.5 Z"/><path d="M2.0 12.4 L11.9 2.5 L16.1 6.7 L6.2 16.6 Z"/><path d="M13.1 1.3 L14.0 0.4 Q14.6 -0.2 15.2 0.4 L18.8 4.0 Q19.4 4.6 18.8 5.2 L17.3 6.5 Z"/></g></svg>
<svg class="s" style="left:1838.20px;top:946.20px;width:17px;height:17px" viewBox="0 0 17 17"><path d="M1.7 1.7 L15.3 15.3 M15.3 1.7 L1.7 15.3" stroke="#878b8e" stroke-width="4.7" stroke-linecap="butt"/></svg>
<div class="t " style="left:29.58px;top:975.97px;font-size:13.5px;font-weight:normal;color:#333333;letter-spacing:-0.188px;">SUPPLIER</div>
<div class="t " style="left:327.15px;top:976.35px;font-size:14px;font-weight:normal;color:#1c5a9c;letter-spacing:-0.102px;"><span style="text-decoration:underline">PARADISE_SPEAKERS</span></div>
<div class="t " style="left:564.09px;top:975.97px;font-size:13.5px;font-weight:normal;color:#333333;letter-spacing:0.558px;">DANIEL</div>
<div class="t " style="left:672.38px;top:975.97px;font-size:13.5px;font-weight:normal;color:#333333;letter-spacing:-0.276px;">SCHOERNER</div>
<div class="t " style="left:778.99px;top:975.97px;font-size:13.5px;font-weight:normal;color:#333333;letter-spacing:0.002px;">PARADISE SPEAKERS</div>
<div class="t " style="left:938.62px;top:975.97px;font-size:13.5px;font-weight:normal;color:#333333;letter-spacing:0.46px;">205 ANNAGEM BLVD., MISSISSAUGA, L5T 2V1, CAN</div>
<svg class="s" style="left:1365.10px;top:974.20px;width:17px;height:17px" viewBox="0 0 17 17"><circle cx="8.5" cy="8.5" r="8.4" fill="#16993c"/><path d="M4.6 8.9 L7.3 11.5 L12.6 6.0" fill="none" stroke="#fff" stroke-width="2.1" stroke-linecap="round" stroke-linejoin="round"/></svg>
<div class="t " style="left:1423.29px;top:975.97px;font-size:13.5px;font-weight:normal;color:#333333;letter-spacing:-0.043px;">RPLS_PASSED</div>
<div class="t " style="left:1607.73px;top:976.35px;font-size:14px;font-weight:normal;color:#1c5a9c;letter-spacing:0.171px;"><span style="text-decoration:underline">View Party Screening Results</span></div>
<svg class="s" style="left:1814.00px;top:973.70px;width:20px;height:19px" viewBox="0 0 20 19"><g fill="#878b8e"><path d="M0 18.6 L1.1 13.4 L5.2 17.5 Z"/><path d="M2.0 12.4 L11.9 2.5 L16.1 6.7 L6.2 16.6 Z"/><path d="M13.1 1.3 L14.0 0.4 Q14.6 -0.2 15.2 0.4 L18.8 4.0 Q19.4 4.6 18.8 5.2 L17.3 6.5 Z"/></g></svg>
<svg class="s" style="left:1838.20px;top:974.30px;width:17px;height:17px" viewBox="0 0 17 17"><path d="M1.7 1.7 L15.3 15.3 M15.3 1.7 L1.7 15.3" stroke="#878b8e" stroke-width="4.7" stroke-linecap="butt"/></svg>
<svg class="s" style="left:33.70px;top:1019.60px;width:13px;height:13px" viewBox="0 0 13 13"><path d="M12.9 0 V12.9 H0 Z" fill="#8a8d90"/></svg>
<div class="t " style="left:54.46px;top:1015.61px;font-size:17px;font-weight:bold;color:#161513;letter-spacing:-0.161px;">Involved Locations</div>
<div class="btn" style="left:20.00px;top:1047.00px;width:132.00px;height:28.00px"></div>
<div class="t " style="left:30.84px;top:1055.73px;font-size:14.5px;font-weight:bold;color:#161513;letter-spacing:-0.121px;">Transaction Line</div>
<div class="btn" style="left:157.00px;top:1047.00px;width:43.00px;height:28.00px"></div>
<div class="t " style="left:167.94px;top:1055.73px;font-size:14.5px;font-weight:bold;color:#161513;letter-spacing:-0.369px;">Top</div>
</body></html>
